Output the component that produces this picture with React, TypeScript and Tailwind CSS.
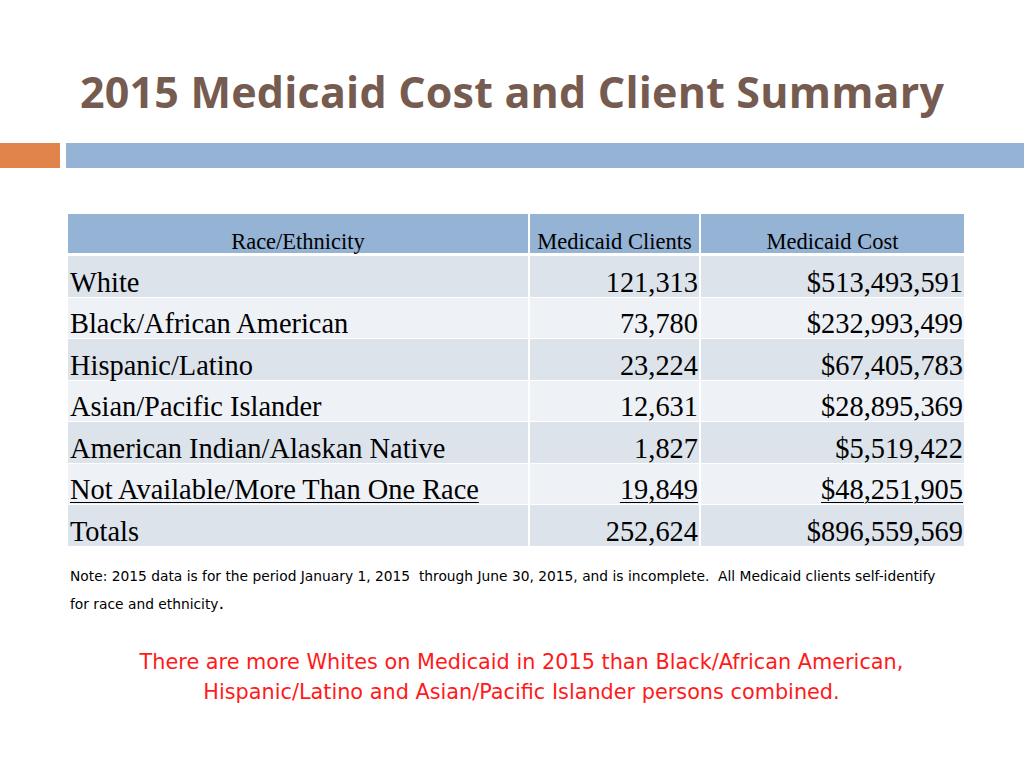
const rows = [
  { race: 'White', clients: '121,313', cost: '$513,493,591' },
  { race: 'Black/African American', clients: '73,780', cost: '$232,993,499' },
  { race: 'Hispanic/Latino', clients: '23,224', cost: '$67,405,783' },
  { race: 'Asian/Pacific Islander', clients: '12,631', cost: '$28,895,369' },
  { race: 'American Indian/Alaskan Native', clients: '1,827', cost: '$5,519,422' },
  { race: 'Not Available/More Than One Race', clients: '19,849', cost: '$48,251,905', underline: true },
  { race: 'Totals', clients: '252,624', cost: '$896,559,569' },
];

const serif = "font-['Liberation_Serif','Times_New_Roman',serif]";
const gothic = "font-['DejaVu_Sans','Open_Sans',sans-serif]";

export default function App() {
  return (
    <div className="w-[1024px] h-[768px] bg-white overflow-hidden relative">
      {/* Title */}
      <h1 className="pl-[80px] pt-[66px] h-[143px] text-[43px] leading-[52px] font-bold text-[#765b50] font-['Open_Sans',sans-serif] tracking-[0.2px]">
        2015 Medicaid Cost and Client Summary
      </h1>

      {/* Accent bars */}
      <div className="flex gap-[6px] h-[25px]">
        <div className="w-[60px] bg-[#e0844b]" />
        <div className="flex-1 bg-[#94b3d5]" />
      </div>

      {/* Table */}
      <div className={`mt-[46px] ml-[68px] w-[896px] ${serif} text-black`}>
        <div className="grid grid-cols-[460px_169px_263px] gap-x-[2px] h-[39px] bg-white">
          <div className="bg-[#94b3d5] flex items-end justify-center text-[22.5px] leading-[22px]">Race/Ethnicity</div>
          <div className="bg-[#94b3d5] flex items-end justify-center text-[22.5px] leading-[22px]">Medicaid Clients</div>
          <div className="bg-[#94b3d5] flex items-end justify-center text-[22.5px] leading-[22px]">Medicaid Cost</div>
        </div>
        <div className="mt-[3px] flex flex-col gap-y-[1px]">
          {rows.map((r, i) => {
            const bg = i % 2 === 0 ? 'bg-[#dde3eb]' : 'bg-[#eef1f6]';
            const u = r.underline ? 'underline underline-offset-[3px] decoration-[1px]' : '';
            return (
              <div key={r.race} className="grid grid-cols-[460px_169px_263px] gap-x-[2px] h-[40.5px]">
                <div className={`${bg} flex items-end pl-[2px] text-[28.4px] leading-[29px]`}>
                  <span className={u}>{r.race}</span>
                </div>
                <div className={`${bg} flex items-end justify-end pr-[1px] text-[28.4px] leading-[29px]`}>
                  <span className={u}>{r.clients}</span>
                </div>
                <div className={`${bg} flex items-end justify-end pr-[1px] text-[28.4px] leading-[29px]`}>
                  <span className={u}>{r.cost}</span>
                </div>
              </div>
            );
          })}
        </div>
      </div>

      {/* Note */}
      <div className={`ml-[70px] mt-[16px] w-[930px] ${gothic} text-[13.8px] leading-[28px] text-black`}>
        <p>Note: 2015 data is for the period January 1, 2015&nbsp; through June 30, 2015, and is incomplete.&nbsp; All Medicaid clients self-identify</p>
        <p>for race and ethnicity<span className="text-[18px] leading-[0]">.</span></p>
      </div>

      {/* Conclusion */}
      <div className={`mt-[29px] pl-[19px] text-center ${gothic} text-[20.8px] leading-[30px] text-[#ff1a1a]`}>
        <p>There are more Whites on Medicaid in 2015 than Black/African American,</p>
        <p>Hispanic/Latino and Asian/Pacific Islander persons combined.</p>
      </div>
    </div>
  );
}
